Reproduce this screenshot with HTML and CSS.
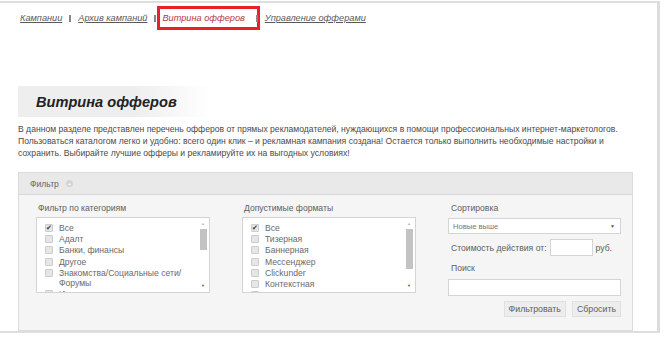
FILE: index.html
```html
<!DOCTYPE html>
<html lang="ru">
<head>
  <meta charset="UTF-8" />
  <title>Витрина офферов</title>
  <link rel="stylesheet" href="styles.css">
</head>
<body>
  <div class="page">
    <div class="tabs">
      <a href="#">Кампании</a>
      <span class="sep"></span>
      <a href="#">Архив кампаний</a>
      <span class="sep"></span>
      <span class="current"><a href="#">Витрина офферов</a></span>
      <span class="sep"></span>
      <a href="#">Управление офферами</a>
    </div>

    <div class="title"><h1>Витрина офферов</h1></div>

    <p class="intro">В данном разделе представлен перечень офферов от прямых рекламодателей, нуждающихся в помощи профессиональных интернет-маркетологов. Пользоваться каталогом легко и удобно: всего один клик – и рекламная кампания создана! Остается только выполнить необходимые настройки и сохранить. Выбирайте лучшие офферы и рекламируйте их на выгодных условиях!</p>

    <div class="filter">
      <div class="filter-head">Фильтр <span class="toggle">&#9650;</span></div>
      <div class="filter-body">
        <div class="col">
          <div class="label">Фильтр по категориям</div>
          <div class="listbox">
            <ul class="checks">
              <li><span class="cb on">&#10004;</span>Все</li>
              <li><span class="cb"></span>Адалт</li>
              <li><span class="cb"></span>Банки, финансы</li>
              <li><span class="cb"></span>Другое</li>
              <li><span class="cb"></span>Знакомства/Социальные сети/ Форумы</li>
              <li><span class="cb"></span>Игры</li>
            </ul>
            <div class="scroll">
              <span class="arr">&#9650;</span>
              <span class="thumb"></span>
              <span class="arr down">&#9660;</span>
            </div>
          </div>
        </div>

        <div class="col">
          <div class="label">Допустимые форматы</div>
          <div class="listbox">
            <ul class="checks">
              <li><span class="cb on">&#10004;</span>Все</li>
              <li><span class="cb"></span>Тизерная</li>
              <li><span class="cb"></span>Баннерная</li>
              <li><span class="cb"></span>Мессенджер</li>
              <li><span class="cb"></span>Clickunder</li>
              <li><span class="cb"></span>Контекстная</li>
              <li><span class="cb"></span>Видео</li>
            </ul>
            <div class="scroll">
              <span class="arr">&#9650;</span>
              <span class="thumb tall"></span>
              <span class="arr down">&#9660;</span>
            </div>
          </div>
        </div>

        <div class="col side">
          <div class="label">Сортировка</div>
          <div class="select"><span>Новые выше</span><span class="caret">&#9660;</span></div>
          <div class="price">Стоимость действия от: <span class="input small"></span> руб.</div>
          <div class="label">Поиск</div>
          <div class="input"></div>
          <div class="buttons">
            <button>Фильтровать</button>
            <button>Сбросить</button>
          </div>
        </div>
      </div>
    </div>
  </div>
</body>
</html>
```

FILE: styles.css
```css
body {
  margin: 0;
  font-family: "Liberation Sans", Arial, sans-serif;
  color: #444;
  background: #fff;
}

.page {
  width: 660px;
  height: 332px;
  margin-top: 1px;
  padding: 0 0 0 18px;
  box-sizing: border-box;
  border-top: 2px solid #dedede;
  border-right: 3px solid #dcdcdc;
  border-bottom: 2px solid #dedede;
  overflow: hidden;
}

/* top links */
.tabs {
  display: flex;
  align-items: center;
  height: 24px;
  margin-top: 3px;
  padding-left: 2px;
  font-size: 9.2px;
  font-style: italic;
}

.tabs a {
  color: #5a5a5a;
  text-decoration: underline;
}

.sep {
  display: inline-block;
  width: 2px;
  height: 7px;
  background: #888;
  margin: 0 7px;
  position: relative;
}

.current {
  border: 3px solid #e8202a;
  height: 18px;
  display: flex;
  align-items: center;
  padding: 0 12px 0 2px;
  margin-left: -6px;
  margin-right: -11px;
}

.current a {
  color: #b5384a;
  text-decoration: none;
}

/* page title */
.title {
  margin-top: 56px;
  width: 192px;
  height: 31px;
  background: linear-gradient(to right, #eeeeee 60%, #fff);
  display: flex;
  align-items: center;
}

.title h1 {
  margin: 0 0 0 18px;
  font-size: 14.6px;
  font-style: italic;
  font-weight: bold;
  color: #222;
}

.intro {
  margin: 6px 0 0;
  font-size: 8.6px;
  line-height: 12px;
  color: #4a4a4a;
  width: 615px;
}

/* filter panel */
.filter {
  margin-top: 13px;
  width: 613px;
  border: 1px solid #dcdcdc;
  background: #f5f5f5;
}

.filter-head {
  height: 21px;
  background: #e9e9e9;
  border-bottom: 1px solid #d8d8d8;
  font-size: 8.6px;
  color: #666;
  display: flex;
  align-items: center;
  padding-left: 11px;
}

.toggle {
  display: inline-flex;
  align-items: center;
  justify-content: center;
  width: 7px;
  height: 7px;
  margin-left: 7px;
  border-radius: 50%;
  background: #d4d4d4;
  color: #fff;
  font-size: 4px;
}

.filter-body {
  display: flex;
  gap: 32px;
  padding: 8px 0 0 17px;
  height: 127px;
}

.col {
  width: 174px;
}

.label {
  font-size: 8.6px;
  color: #606060;
  height: 10px;
  line-height: 10px;
  padding-left: 2px;
}

.listbox {
  margin-top: 4px;
  height: 74px;
  border: 1px solid #d4d4d4;
  background: #fff;
  display: flex;
  overflow: hidden;
}

.checks {
  list-style: none;
  margin: 0;
  padding: 5px 0 0 8px;
  flex: 1;
  font-size: 8.6px;
  line-height: 10px;
  color: #6a6a6a;
}

.checks li {
  display: flex;
  align-items: flex-start;
  margin-bottom: 1.2px;
}

.cb {
  flex: none;
  width: 6px;
  height: 6px;
  margin: 1px 6px 0 0;
  border: 1px solid #ccc;
  border-radius: 1px;
  background: #e6e6e6;
  font-size: 7px;
  line-height: 6px;
  color: #333;
  text-align: center;
}

.scroll {
  width: 8px;
  margin: 3px 2px 3px 0;
  display: flex;
  flex-direction: column;
  align-items: center;
}

.arr {
  font-size: 4px;
  line-height: 6px;
  color: #bbb;
}

.arr.down {
  margin-top: auto;
  color: #555;
}

.thumb {
  width: 7px;
  height: 21px;
  margin-top: 2px;
  background: #c3c3c3;
}

.thumb.tall {
  height: 40px;
}

.side {
  width: 173px;
}

.side .label {
  padding-left: 3px;
}

.select {
  margin-top: 5px;
  height: 14px;
  border: 1px solid #d4d4d4;
  background: #fff;
  display: flex;
  align-items: center;
  justify-content: space-between;
  padding: 0 5px 0 4px;
  font-size: 7.6px;
  color: #777;
}

.caret {
  font-size: 5px;
  color: #555;
}

.price {
  display: flex;
  align-items: center;
  margin: 5px 0 7px;
  padding-left: 3px;
  font-size: 8.6px;
  color: #606060;
  height: 17px;
}

.input {
  height: 15px;
  border: 1px solid #d4d4d4;
  background: #fff;
  margin-top: 6px;
}

.input.small {
  display: inline-block;
  width: 41px;
  margin: 0 3px 0 3px;
}

.buttons {
  display: flex;
  justify-content: flex-end;
  gap: 6px;
  margin-top: 5px;
}

.buttons button {
  font-family: inherit;
  font-size: 8.8px;
  color: #606060;
  background: #ededed;
  border: 1px solid #e0e0e0;
  height: 16px;
  padding: 0 4px;
}
```
